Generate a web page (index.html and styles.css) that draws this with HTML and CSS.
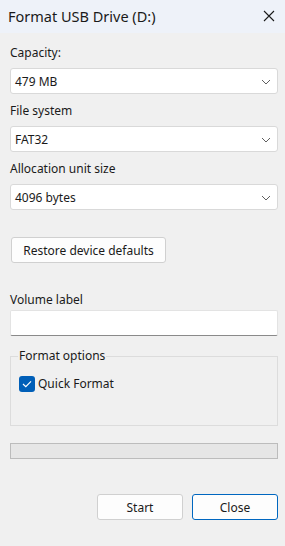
FILE: index.html
```html
<!DOCTYPE html>
<html lang="en">
<head>
    <meta charset="UTF-8" />
    <meta name="viewport" content="width=device-width, initial-scale=1.0" />
    <title>Format USB Drive (D:)</title>
    <link rel="stylesheet" href="styles.css">
</head>
<body>

<div class="window">
    <!-- Title Bar -->
    <div class="titlebar">
        <span class="title">Format USB Drive (D:)</span>
        <svg class="close-x" width="12" height="12" viewBox="0 0 12 12">
            <path d="M1 1 L11 11 M11 1 L1 11" stroke="#1a1a1a" stroke-width="1.1" fill="none" />
        </svg>
    </div>

    <div class="content">
        <label class="field-label">Capacity:</label>
        <div class="select">
            <span>479 MB</span>
            <svg class="chevron" width="10" height="6" viewBox="0 0 10 6"><path d="M1 1 L5 5 L9 1" stroke="#606060" stroke-width="1" fill="none" /></svg>
        </div>

        <label class="field-label">File system</label>
        <div class="select">
            <span>FAT32</span>
            <svg class="chevron" width="10" height="6" viewBox="0 0 10 6"><path d="M1 1 L5 5 L9 1" stroke="#606060" stroke-width="1" fill="none" /></svg>
        </div>

        <label class="field-label">Allocation unit size</label>
        <div class="select">
            <span>4096 bytes</span>
            <svg class="chevron" width="10" height="6" viewBox="0 0 10 6"><path d="M1 1 L5 5 L9 1" stroke="#606060" stroke-width="1" fill="none" /></svg>
        </div>

        <button class="btn restore">Restore device defaults</button>

        <label class="field-label volume">Volume label</label>
        <div class="text-input"></div>

        <fieldset class="options">
            <legend>Format options</legend>
            <div class="check-row">
                <span class="checkbox">
                    <svg width="10" height="8" viewBox="0 0 10 8"><path d="M1 4 L3.8 6.6 L9 1.4" stroke="#fff" stroke-width="1.2" fill="none" /></svg>
                </span>
                <span>Quick Format</span>
            </div>
        </fieldset>

        <div class="progress"></div>

        <div class="actions">
            <button class="btn">Start</button>
            <button class="btn primary">Close</button>
        </div>
    </div>
</div>

</body>
</html>
```

FILE: styles.css
```css
/* Basic Styles */
body {
    font-family: "Noto Sans", "Open Sans", sans-serif;
    font-size: 12px;
    color: #1a1a1a;
    background-color: #f0f0f0;
    margin: 0;
    padding: 0;
}

.window {
    width: 285px;
    height: 546px;
    background-color: #f0f0f0;
}

.titlebar {
    height: 33px;
    background-color: #eef2f9;
    display: flex;
    align-items: center;
    justify-content: space-between;
    padding: 0 10px 0 8px;
    box-sizing: border-box;
}

.title {
    font-size: 14.5px;
    color: #1a1a1a;
    padding-bottom: 2px;
}

.close-x {
    margin-top: -2px;
}

.content {
    padding: 10px 7px 0 10px;
}

.field-label {
    display: block;
    height: 25px;
    line-height: 20px;
}

.volume {
    height: 20px;
    margin-top: 27px;
}

.select {
    height: 26px;
    background-color: #fff;
    border: 1px solid #d9d9d9;
    border-radius: 3px;
    box-sizing: border-box;
    display: flex;
    align-items: center;
    justify-content: space-between;
    padding: 0 6px 0 4px;
    margin-bottom: 7px;
}

.chevron {
    margin-top: 1px;
}

.btn {
    font-family: "Noto Sans", "Open Sans", sans-serif;
    font-size: 12px;
    color: #1a1a1a;
    background-color: #fdfdfd;
    border: 1px solid #d0d0d0;
    border-radius: 3px;
    height: 26px;
    padding: 0;
    box-sizing: border-box;
}

.restore {
    display: block;
    width: 155px;
    margin: 27px 0 0 1px;
}

.text-input {
    height: 26px;
    background-color: #fff;
    border: 1px solid #e3e3e3;
    border-bottom: 1px solid #8a8a8a;
    border-radius: 2px;
    box-sizing: border-box;
}

.options {
    margin: 13px 0 0 0;
    padding: 4px 8px 0 8px;
    border: 1px solid #dcdcdc;
    height: 77px;
    box-sizing: border-box;
}

.options legend {
    padding: 0 1px;
    margin-left: -1px;
    line-height: 14px;
}

.check-row {
    display: flex;
    align-items: center;
    gap: 3px;
    margin-top: 8px;
}

.checkbox {
    width: 16px;
    height: 16px;
    border-radius: 3px;
    background-color: #005fb8;
    display: flex;
    align-items: center;
    justify-content: center;
}

.progress {
    height: 16px;
    margin-top: 17px;
    background-color: #e6e6e6;
    border: 1px solid #bcbcbc;
    box-sizing: border-box;
}

.actions {
    display: flex;
    justify-content: flex-end;
    gap: 9px;
    margin-top: 35px;
}

.actions .btn {
    width: 86px;
}

.primary {
    border: 1px solid #0067c0;
}
```
